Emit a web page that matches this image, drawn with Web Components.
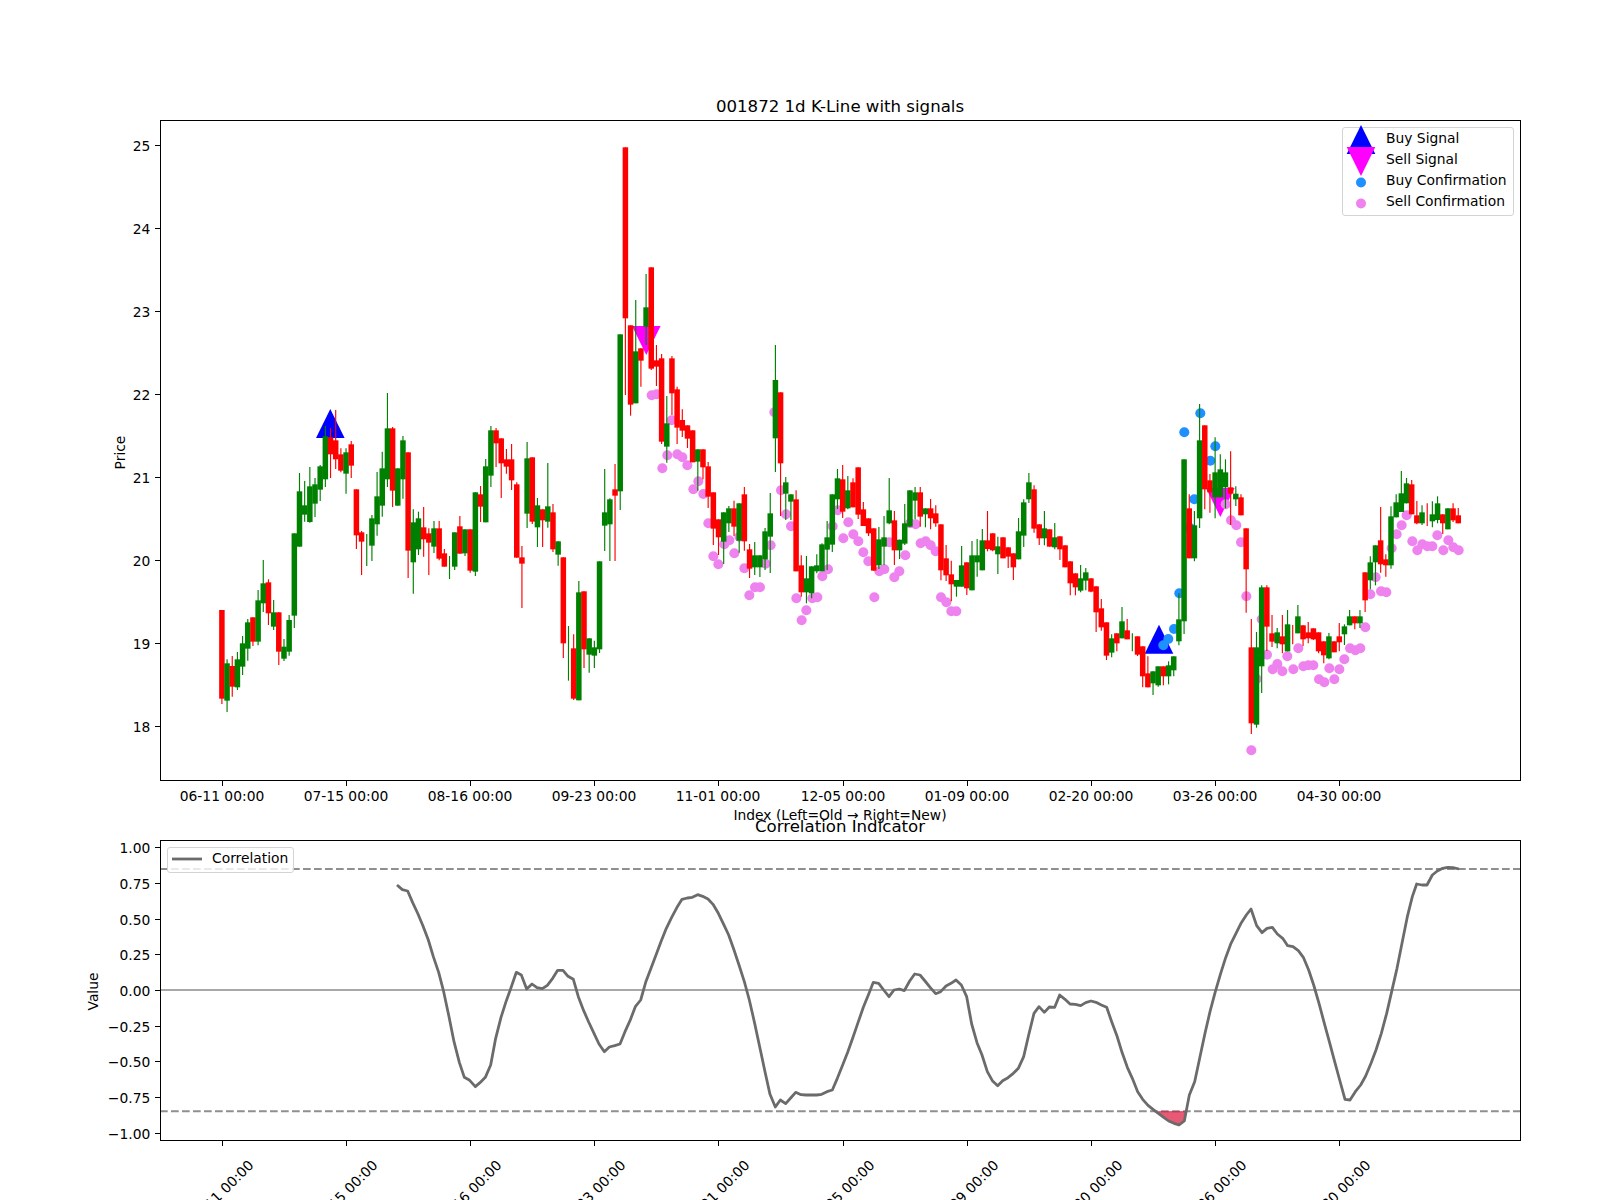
<!DOCTYPE html>
<html>
<head>
<meta charset="utf-8">
<title>001872 1d K-Line with signals</title>
<style>
  html, body { margin: 0; padding: 0; background: #fff; overflow: hidden; }
</style>
</head>
<body>
<stock-figure>
  <kline-panel>
    <plot-legend style="--left: 1342px; --top: 127px; --width: 172px; --pad: 3px;">
      <legend-row marker="buy">Buy Signal</legend-row>
      <legend-row marker="sell">Sell Signal</legend-row>
      <legend-row marker="buy-dot">Buy Confirmation</legend-row>
      <legend-row marker="sell-dot">Sell Confirmation</legend-row>
    </plot-legend>
  </kline-panel>
  <corr-panel>
    <plot-legend style="--left: 167px; --top: 47px; --width: 127px; --pad: 4px;">
      <legend-row marker="line">Correlation</legend-row>
    </plot-legend>
  </corr-panel>
</stock-figure>

<script>
const FONT = '"DejaVu Sans", "Liberation Sans", sans-serif'
const TICK_LABELS = ['06-11 00:00', '07-15 00:00', '08-16 00:00', '09-23 00:00', '11-01 00:00',
  '12-05 00:00', '01-09 00:00', '02-20 00:00', '03-26 00:00', '04-30 00:00']

// candle rows: colour, body top, body bottom, wick top, wick bottom
// values were read off 3x crops, so y = offset + value / 3
const CANDLES = [
  [380, `r 690 956 690 972
g 850 962 838 996
r 858 920 828 950
g 838 922 816 930
g 790 860 768 885
g 727 806 717 842
r 712 785 712 798
g 661 785 630 796
g 610 670 540 696
r 607 700 598 735
g 697 740 660 750
r 697 815 697 855
g 800 836 777 843
g 720 815 705 827
g 460 707 460 744
g 334 500 279 500
g 376 404 303 425
g 319 426 261 428
g 313 371 294 411
g 259 329 255 363
g 169 298 138 321
r 172 223 144 294
r 181 238 90 267
r 223 272 205 277
g 217 281 205 341
r 193 257 183 294
r 328 466 328 507
r 457 485 453 585
g 510 510 462 558
g 415 497 405 543
g 349 433 276 467
g 265 377 215 410
g 145 298 39 321
r 145 332 141 381
g 265 377 265 377
g 181 298 168 356
r 217 512 217 594
g 427 547 388 641
g 415 508 395 525
r 442 478 381 530
r 460 488 445 585
g 445 500 423 519
r 445 536 423 541
r 520 560 507 560
g 560 560 528 597
g 457 560 457 570
r 439 521 408 521
g 448 520 448 528
r 448 572 448 578
g 337 575 337 588
r 343 380 318 426
g 259 427 237 427
g 151 287 138 321
r 151 190 144 261
r 175 250 175 354
r 238 260 207 281
r 238 301 192 330
r 313 533 307 533
r 532 551 498 684
g 235 401 186 444
r 232 425 232 432
g 376 442 354 501
r 388 421 388 501`],
  [430, `g 229 275 99 293
r 247 358 222 366
g 334 374 334 407
r 382 640 382 684
g 670 670 588 752
r 655 806 613 810
g 487 811 453 811
r 484 658 484 714
g 625 674 625 728
g 652 677 632 714
g 394 658 394 669
g 247 287 117 363
g 208 283 205 393
r 178 197 102 393`],
  [130, `g 613 1084 613 1140
r 52 565 52 795
r 586 824 586 857
g 664 820 510 820
r 655 692 655 770
g 532 590 432 645
r 412 716 412 720
r 691 710 645 768
r 685 935 672 942
g 880 950 798 998
r 685 790 678 855
r 778 893 770 942
r 870 902 838 921
r 886 926 886 954
r 901 997 901 997`],
  [430, `g 58 95 58 182
r 58 112 58 148
r 109 200 96 234
r 187 296 187 345
r 268 322 268 375
g 247 335 247 402
g 235 280 228 306
r 235 290 212 318
g 220 332 220 368
r 193 334 171 362
r 358 416 342 444
g 376 412 336 435
g 376 412 376 441
g 304 388 294 420
g 250 320 189 429`],
  [130, `g 750 925 645 1026
r 787 1000 787 1158`],
  [430, `g 157 191 141 270
g 193 215 193 270
r 208 424 181 424
r 406 487 376 500
g 445 487 378 520
g 409 490 409 505
g 406 424 373 430
g 343 424 340 424
g 322 359 273 420
g 193 344 193 366
g 145 208 117 237
r 148 245 105 264
g 181 235 138 238
r 157 232 145 232
r 112 254 112 267
r 238 288 216 288
r 265 310 265 318
r 295 422 295 422
g 328 406 291 417
g 322 350 258 405
g 241 280 144 283
r 271 361 243 405
g 329 361 329 387
g 280 341 222 345
g 181 290 181 290
g 187 212 171 268
r 187 260 171 290
g 235 253 235 292
r 235 265 207 298
r 250 280 226 290
r 283 421 283 451
r 385 436 345 453
r 433 463 392 514
g 450 470 450 500
g 406 470 348 470
r 397 475 397 495
g 376 481 333 481
g 376 397 327 440
g 331 421 297 421
r 331 357 243 364
r 310 361 310 364
g 349 373 320 432
r 322 385 322 385
r 352 380 352 414
r 370 412 370 450
g 304 388 264 388
g 217 317 208 351
g 157 208 129 219
r 178 296 166 308
r 283 325 283 345
g 295 325 243 346
r 298 350 298 350
g 322 352 279 358
r 319 358 319 390
r 346 412 346 412
r 394 460 394 496
r 430 472 430 496
g 445 482 405 487
g 427 452 414 481
r 445 485 445 487
r 469 547 469 606
r 535 592 507 602
r 577 677 577 690
g 625 668 613 682
r 610 640 610 664
g 574 625 531 625
r 601 628 567 628
g 640 640 610 664
r 619 674 619 678
r 649 739 649 772
r 730 772 679 772
g 724 760 724 795
g 709 766 709 770
r 709 739 709 766
g 706 739 694 763
g 679 721 679 739
g 568 634 490 646
g 88 574 88 612
r 235 385 193 385
g 286 385 243 394`],
  [390, `g 151 385 42 414
r 106 298 106 358
r 271 307 252 368
g 247 322 142 385
g 238 322 193 322
g 247 292 208 355
r 292 311 184 405
g 311 328 289 348
r 322 376 313 376
r 415 538 415 668
r 772 1000 687 1032
g 772 1004 726 1013
g 592 829 586 909
r 592 710 586 783
r 730 755 675 771
g 727 760 714 775
r 739 763 675 790
g 703 784 660 784
r 740 740 705 763
g 679 730 645 730
r 706 748 706 768
r 727 745 696 760
r 715 748 715 750
r 727 784 727 790
r 754 796 754 820
g 739 805 729 808
r 754 787 754 787
r 739 757 699 784
g 709 733 703 765
g 679 706 660 706
r 679 700 679 718
g 679 700 660 714
r 547 631 547 666
g 517 571 499 598
g 466 517 466 586
r 451 523 351 548
r 508 526 493 560
g 379 526 349 536
g 337 382 313 382
g 310 366 243 366
g 280 340 264 340
r 283 373 270 373
r 376 400 333 403
g 367 400 346 405
r 370 370 340 408
g 373 394 334 412
g 340 390 319 400
r 373 400 373 432
g 355 418 355 418
r 355 391 340 396
r 376 400 354 400`]
]

const BUY_DOTS = [[1184.3, 432.3], [1200.3, 413.3], [1215.3, 446.3], [1210.3, 460.7], [1194.3, 499.3],
  [1179.3, 593.3], [1174, 629], [1168.3, 639], [1163.3, 645.3], [1190, 528]]

// crop origin x, crop origin y, then pairs of crop coordinates
const SELL_DOTS = [
  [540, 130, [335, 796, 350, 793, 395, 871, 703, 847]],
  [540, 430, [367, 115, 382, 76, 412, 73, 427, 82, 442, 106, 475, 154, 460, 178, 490, 192, 505, 280,
    520, 379, 535, 403, 553, 343, 568, 331, 583, 370, 598, 320, 613, 415, 628, 496, 645, 472, 660, 472,
    677, 401, 692, 346, 723, 181, 738, 253, 753, 289, 769, 505, 785, 571, 799, 541, 817, 505, 832, 502,
    847, 439, 864, 418, 878, 289, 893, 241, 910, 325, 925, 277, 940, 313, 955, 334, 970, 367, 985, 394,
    1003, 502, 1018, 424, 1033, 418, 1048, 337, 1063, 442, 1078, 424, 1096, 376, 1110, 280, 1127, 283,
    1142, 340, 1157, 334, 1172, 346, 1187, 364, 1203, 502]],
  [930, 430, [49, 517, 64, 544, 79, 544]],
  [1130, 390, [287, 343, 303, 391, 319, 406, 333, 457, 349, 619, 364, 1081, 380, 867, 395, 688, 411, 794,
    428, 838, 442, 822, 457, 844, 472, 799, 490, 838, 505, 775, 520, 829, 535, 826, 550, 826, 567, 868,
    583, 877, 598, 835, 613, 868, 628, 838, 643, 808, 660, 775, 676, 781, 691, 775, 706, 712, 721, 613,
    737, 562, 753, 604, 769, 607, 785, 475, 800, 433, 815, 406, 830, 376, 847, 454, 862, 481, 877, 463,
    892, 469, 907, 469, 922, 436, 940, 481, 955, 451, 970, 472, 986, 481]]
]

const CORR = [
  [385, 860, [36, 75, 52, 89, 68, 93, 83, 128, 99, 162, 114, 198, 130, 240, 145, 290, 161, 337, 176, 395,
    192, 470, 207, 545, 223, 607, 238, 652, 254, 661, 271, 680, 285, 668, 301, 652, 317, 615, 332, 535,
    348, 472, 363, 425, 378, 383, 394, 337, 409, 345, 425, 387, 441, 372, 456, 383, 472, 386, 487, 376,
    503, 355, 518, 331, 534, 331, 549, 349, 565, 358, 580, 410, 596, 452, 611, 486, 627, 520, 642, 552,
    658, 575, 673, 561, 689, 557, 705, 552, 720, 515, 735, 482, 751, 440, 767, 420, 782, 367, 798, 325,
    813, 285, 829, 242, 844, 205, 860, 172, 876, 142, 891, 118, 907, 114, 922, 112, 938, 104, 953, 109,
    969, 117, 984, 133, 1000, 160, 1016, 193, 1031, 225, 1047, 270, 1062, 315, 1078, 365, 1093, 420,
    1109, 490, 1124, 560, 1140, 635, 1155, 703, 1171, 741]],
  [770, 950, [31, 450, 47, 461, 62, 444, 77, 427, 93, 434, 108, 435, 124, 435, 140, 435, 155, 433, 171, 425,
    187, 420, 202, 385, 218, 345, 233, 307, 249, 262, 264, 218, 280, 172, 295, 135, 310, 97, 326, 100,
    341, 120, 357, 140, 372, 120, 388, 117, 403, 122, 419, 93, 434, 72, 450, 75, 465, 93, 481, 113,
    497, 131, 512, 125, 528, 108, 543, 100, 558, 90, 574, 105, 590, 140, 605, 222, 621, 278, 636, 315,
    652, 365, 667, 392, 683, 407, 698, 392, 714, 383, 730, 370, 745, 355, 761, 320, 776, 255, 792, 190,
    807, 170, 823, 187, 838, 171, 854, 172, 869, 135, 885, 148, 900, 162, 916, 163, 932, 167, 947, 158,
    963, 153, 978, 157, 994, 165, 1010, 172, 1025, 215, 1041, 258, 1056, 307, 1072, 352, 1087, 385,
    1103, 425, 1118, 448, 1134, 466]],
  [1130, 860, [70, 749, 85, 760, 101, 772, 116, 783, 132, 790, 147, 795, 163, 783, 178, 705, 194, 665,
    209, 595, 225, 520, 240, 455, 256, 395, 272, 340, 287, 293, 303, 250, 318, 220, 334, 188, 349, 165,
    363, 147, 380, 197, 396, 218, 411, 205, 427, 202, 442, 222, 458, 235, 473, 257, 489, 260, 505, 272,
    520, 292, 536, 330, 551, 375, 567, 430, 583, 490, 598, 545, 614, 605, 629, 660, 645, 718, 660, 720,
    676, 695, 692, 675, 707, 648, 723, 610, 738, 570, 754, 520, 770, 460, 785, 395, 801, 325, 816, 250,
    832, 170, 847, 110, 860, 72, 876, 75, 891, 75, 907, 45, 922, 33, 938, 25, 953, 22, 969, 23, 987, 27]]
]

// turn flat crop coordinates into page coordinates
const toPage = ([ox, oy, flat]) => {
  const out = []
  for (let i = 0; i < flat.length; i += 2) out.push([ox + flat[i] / 3, oy + flat[i + 1] / 3])
  return out
}
const f = (n) => n.toFixed(2)
const tickX = (k) => Math.round(222.3 + 124.15 * k - 0.5) + 0.5

const triangle = (x, y, up) => {
  const tip = up ? y - 29 : y + 29
  return `${f(x - 14.3)},${f(y)} ${f(x + 14.3)},${f(y)} ${f(x)},${f(tip)}`
}

/** Spine rectangle, shared by both panels. */
const frame = (top, bottom) =>
  `<rect x="160.5" y="${top}" width="1360" height="${bottom - top}" fill="none" stroke="#000" stroke-width="1.11" shape-rendering="crispEdges"/>`

const xTicks = (bottom) => TICK_LABELS.map((_, k) =>
  `<line x1="${tickX(k)}" x2="${tickX(k)}" y1="${bottom}" y2="${bottom + 5}" stroke="#000" stroke-width="1.11" shape-rendering="crispEdges"/>`).join('')

const yTick = (y, label) =>
  `<line x1="155" x2="160" y1="${y}" y2="${y}" stroke="#000" stroke-width="1.11" shape-rendering="crispEdges"/>
   <text x="150.3" y="${f(y + 5)}" text-anchor="end">${label}</text>`

customElements.define('stock-figure', class extends HTMLElement {
  constructor () {
    super()
    this.attachShadow({ mode: 'open' }).innerHTML = `
      <style>
        :host { display: flex; flex-direction: column; width: 1600px; height: 1200px; overflow: hidden; background: #fff; }
      </style>
      <slot></slot>`
  }
})

customElements.define('kline-panel', class extends HTMLElement {
  constructor () {
    super()
    let i = 0
    let candles = ''
    for (const [off, text] of CANDLES) {
      for (const row of text.split('\n')) {
        const [c, top, bot, wt, wb] = row.trim().split(' ')
        const color = c === 'r' ? '#f00' : '#008000'
        const x = 221.9 + 5.173 * i
        const y = (v) => off + Number(v) / 3
        candles += `<line x1="${f(x)}" x2="${f(x)}" y1="${f(y(wt))}" y2="${f(y(wb))}" stroke="${color}" stroke-width="1.15"/>`
        if (top !== bot) {
          candles += `<rect x="${f(x - 2.75)}" y="${f(y(top))}" width="5.5" height="${f(y(bot) - y(top))}" fill="${color}"/>`
        }
        i++
      }
    }
    const buy = BUY_DOTS.map(([x, y]) => `<circle cx="${x}" cy="${y}" r="5" fill="#1e90ff"/>`).join('')
    const sell = SELL_DOTS.flatMap(toPage).map(([x, y]) => `<circle cx="${f(x)}" cy="${f(y)}" r="5" fill="#ee82ee"/>`).join('')
    const yTicks = [18, 19, 20, 21, 22, 23, 24, 25].map((p) => yTick(560.5 - (p - 20) * 83, p)).join('')
    const xLabels = TICK_LABELS.map((t, k) => `<text x="${tickX(k) - 0.5}" y="801" text-anchor="middle">${t}</text>`).join('')

    this.attachShadow({ mode: 'open' }).innerHTML = `
      <style>
        :host { display: block; position: relative; width: 1600px; height: 800px; flex: none; font: 13.85px ${FONT}; }
        svg { position: absolute; inset: 0; overflow: visible; }
        text { font: 13.85px ${FONT}; fill: #000; }
        .title { font-size: 16.6px; }
      </style>
      <svg width="1600" height="800" viewBox="0 0 1600 800">
        <polygon points="${triangle(330.3, 438, true)}" fill="#00f"/>
        <polygon points="${triangle(1159, 653.7, true)}" fill="#00f"/>
        <polygon points="${triangle(646.3, 326, false)}" fill="#f0f"/>
        <polygon points="${triangle(1220.3, 488, false)}" fill="#f0f"/>
        ${buy}${sell}${candles}
        ${frame(120.5, 780.5)}
        ${xTicks(780.5)}${yTicks}${xLabels}
        <text class="title" x="840" y="112" text-anchor="middle">001872 1d K-Line with signals</text>
        <text x="840" y="820" text-anchor="middle">Index (Left=Old → Right=New)</text>
        <text x="125" y="452.5" text-anchor="middle" transform="rotate(-90 125 452.5)">Price</text>
      </svg>
      <slot></slot>`
  }
})

customElements.define('corr-panel', class extends HTMLElement {
  constructor () {
    super()
    const top = 800
    const pts = CORR.flatMap(toPage).map(([x, y]) => `${f(x)},${f(y - top)}`).join(' ')
    const shade = toPage([1130, 860, [85, 755, 101, 772, 116, 783, 132, 790, 147, 795, 163, 783, 166, 755]])
      .map(([x, y]) => `${f(x)},${f(y - top)}`).join(' ')
    const yTicks = [1, 0.75, 0.5, 0.25, 0, -0.25, -0.5, -0.75, -1].map((v) => {
      const label = (v < 0 ? '\u2212' : '') + Math.abs(v).toFixed(2)
      return yTick(Math.round(190.5 - 142.8 * v - 0.5) + 0.5, label)
    }).join('')
    const xLabels = TICK_LABELS.map((t, k) =>
      `<text x="${tickX(k) + 2}" y="396" text-anchor="middle" transform="rotate(-45 ${tickX(k) + 2} 396)">${t}</text>`).join('')

    this.attachShadow({ mode: 'open' }).innerHTML = `
      <style>
        :host { display: block; position: relative; width: 1600px; height: 400px; flex: none; font: 13.85px ${FONT}; }
        svg { position: absolute; inset: 0; overflow: visible; }
        text { font: 13.85px ${FONT}; fill: #000; }
        .title { font-size: 16.6px; }
      </style>
      <svg width="1600" height="400" viewBox="0 0 1600 400">
        <line x1="160" x2="1520" y1="190" y2="190" stroke="#a8a8a8" stroke-width="2"/>
        <line x1="160" x2="1520" y1="69" y2="69" stroke="#8f8f8f" stroke-width="2.08" stroke-dasharray="7.7 3.3"/>
        <line x1="160" x2="1520" y1="311.2" y2="311.2" stroke="#8f8f8f" stroke-width="2.08" stroke-dasharray="7.7 3.3"/>
        <polygon points="${shade}" fill="#dc143c" fill-opacity="0.7" stroke="#dc143c" stroke-opacity="0.7" stroke-width="1"/>
        <polyline points="${pts}" fill="none" stroke="#6b6b6b" stroke-width="2.78" stroke-linejoin="round"/>
        ${frame(40.5, 340.5)}
        ${xTicks(340.5)}${yTicks}${xLabels}
        <text class="title" x="840" y="32" text-anchor="middle">Correlation Indicator</text>
        <text x="98" y="191.5" text-anchor="middle" transform="rotate(-90 98 191.5)">Value</text>
      </svg>
      <slot></slot>`
  }
})

customElements.define('plot-legend', class extends HTMLElement {
  constructor () {
    super()
    this.attachShadow({ mode: 'open' }).innerHTML = `
      <style>
        :host {
          position: absolute; left: var(--left); top: var(--top); width: var(--width);
          display: flex; flex-direction: column; box-sizing: border-box; padding: 0 var(--pad) 3px;
          background: rgba(255, 255, 255, 0.8); border: 1.1px solid #d4d4d4; border-radius: 3px;
        }
      </style>
      <slot></slot>`
  }
})

customElements.define('legend-row', class extends HTMLElement {
  constructor () {
    super()
    const marks = {
      buy: '<polygon points="0.7,26 29.3,26 15,-3" fill="#00f"/>',
      sell: '<polygon points="0.7,19 29.3,19 15,48" fill="#f0f" transform="translate(0 -21)"/>',
      'buy-dot': '<circle cx="15" cy="12.5" r="5" fill="#1e90ff"/>',
      'sell-dot': '<circle cx="15" cy="12.5" r="5" fill="#ee82ee"/>',
      line: '<line x1="0" x2="30" y1="11" y2="11" stroke="#6b6b6b" stroke-width="2.78"/>'
    }
    this.attachShadow({ mode: 'open' }).innerHTML = `
      <style>
        :host { display: flex; align-items: center; gap: 10px; height: 21px; font: 13.85px ${FONT}; color: #000; white-space: nowrap; }
        svg { flex: none; overflow: visible; }
        span { padding-bottom: 2px; }
      </style>
      <svg width="30" height="21" viewBox="0 0 30 21">${marks[this.getAttribute('marker')] || ''}</svg>
      <span><slot></slot></span>`
  }
})
</script>
</body>
</html>
